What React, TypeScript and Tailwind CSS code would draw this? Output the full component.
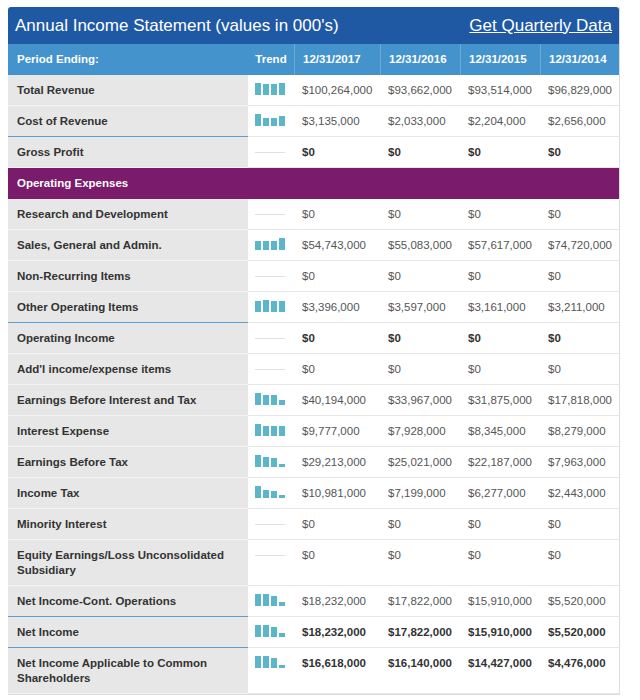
import React from "react";

type Row = {
  label: string;
  values?: number[];
  bold?: boolean;
  blueLine?: boolean;
  section?: boolean;
};

const ROWS: Row[] = [
  { label: "Total Revenue", values: [100264000, 93662000, 93514000, 96829000] },
  { label: "Cost of Revenue", values: [3135000, 2033000, 2204000, 2656000], blueLine: true },
  { label: "Gross Profit", values: [0, 0, 0, 0], bold: true },
  { label: "Operating Expenses", section: true },
  { label: "Research and Development", values: [0, 0, 0, 0] },
  { label: "Sales, General and Admin.", values: [54743000, 55083000, 57617000, 74720000] },
  { label: "Non-Recurring Items", values: [0, 0, 0, 0] },
  { label: "Other Operating Items", values: [3396000, 3597000, 3161000, 3211000], blueLine: true },
  { label: "Operating Income", values: [0, 0, 0, 0], bold: true },
  { label: "Add'l income/expense items", values: [0, 0, 0, 0] },
  { label: "Earnings Before Interest and Tax", values: [40194000, 33967000, 31875000, 17818000] },
  { label: "Interest Expense", values: [9777000, 7928000, 8345000, 8279000] },
  { label: "Earnings Before Tax", values: [29213000, 25021000, 22187000, 7963000] },
  { label: "Income Tax", values: [10981000, 7199000, 6277000, 2443000] },
  { label: "Minority Interest", values: [0, 0, 0, 0] },
  { label: "Equity Earnings/Loss Unconsolidated Subsidiary", values: [0, 0, 0, 0] },
  { label: "Net Income-Cont. Operations", values: [18232000, 17822000, 15910000, 5520000], blueLine: true },
  { label: "Net Income", values: [18232000, 17822000, 15910000, 5520000], bold: true, blueLine: true },
  { label: "Net Income Applicable to Common Shareholders", values: [16618000, 16140000, 14427000, 4476000], bold: true },
];

const PERIODS = ["12/31/2017", "12/31/2016", "12/31/2015", "12/31/2014"];

const formatMoney = (v: number) => `$${v.toLocaleString("en-US")}`;

const GRID = "grid grid-cols-[240px_46px_86px_80px_80px_80px]";

const Trend = ({ values }: { values: number[] }) => {
  const max = Math.max(...values);
  if (max === 0) {
    return <div className="mt-[7px] h-px w-[30px] bg-[#e0e0e0]" />;
  }
  return (
    <div className="flex h-[12px] items-end gap-[2px]">
      {values.map((v, i) => (
        <span
          key={i}
          className="w-[6px] bg-[#5bb6c9]"
          style={{ height: `${Math.max(2, Math.round((v / max) * 12))}px` }}
        />
      ))}
    </div>
  );
};

export default function App() {
  return (
    <div className="bg-white pl-2 pt-[7px] font-['Liberation_Sans',Arial,sans-serif]">
      <div className="w-[612px] border-b border-r border-[#dcdcdc]">
        <div className="flex h-[37px] items-center justify-between rounded-t-[3px] bg-[#1f58a3] px-[7px] text-[17px] text-white">
          <span>Annual Income Statement (values in 000's)</span>
          <span className="underline">Get Quarterly Data</span>
        </div>
        <div className={`${GRID} h-[31px] bg-[#4493cd] text-[11.5px] font-bold text-white`}>
          <div className="flex items-center pl-[9px]">Period Ending:</div>
          <div className="flex items-center justify-center">Trend</div>
          {PERIODS.map((p) => (
            <div key={p} className="flex items-center border-l border-[#6aa9d8] pl-[8px]">
              {p}
            </div>
          ))}
        </div>
        {ROWS.map((row) => {
          if (row.section) {
            return (
              <div
                key={row.label}
                className="flex h-[31px] items-center bg-[#7a1b6b] pl-[9px] text-[11.5px] font-bold text-white"
              >
                {row.label}
              </div>
            );
          }
          const values = row.values ?? [];
          return (
            <div key={row.label} className={`${GRID} text-[11.5px] leading-[15px]`}>
              <div
                className={`border-b bg-[#e7e7e7] pb-[7px] pl-[9px] pr-[12px] pt-[8px] font-bold text-[#333] ${
                  row.blueLine ? "border-[#5d9fd0]" : "border-[#f3f3f3]"
                }`}
              >
                {row.label}
              </div>
              <div className="border-b border-[#e6e6e6] pb-[7px] pl-[7px] pt-[8px]">
                <Trend values={values} />
              </div>
              {values.map((v, i) => (
                <div
                  key={i}
                  className={`border-b border-[#e6e6e6] pb-[7px] pl-[8px] pt-[8px] ${
                    row.bold ? "font-bold text-[#333]" : "text-[#555]"
                  }`}
                >
                  {formatMoney(v)}
                </div>
              ))}
            </div>
          );
        })}
      </div>
    </div>
  );
}
